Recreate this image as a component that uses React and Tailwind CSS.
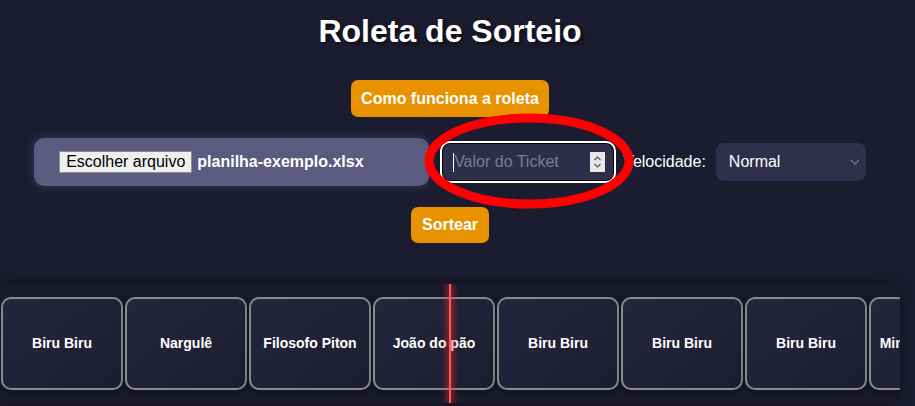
import React from "react";

const cards = ["Biru Biru", "Nargulê", "Filosofo Piton", "João do pão", "Biru Biru", "Biru Biru", "Biru Biru", "Minotauro Azul"];

export default function App() {
  return (
    <div className="relative min-h-[406px] w-[915px] overflow-hidden bg-[#1c1c30] font-['Liberation_Sans',Arial,sans-serif] text-white">
      <div className="flex w-[900px] flex-col items-center">
        <h1 className="mt-[12px] text-[32px] font-bold leading-[38px] [text-shadow:2px_2px_4px_rgba(0,0,0,0.6)]">Roleta de Sorteio</h1>
        <button className="mt-[30px] h-[37px] rounded-[7px] bg-[#e89200] px-[10px] text-[16px] font-bold text-white">Como funciona a roleta</button>
        <div className="mt-[21px] flex items-center">
          <div className="flex h-[48px] w-[395px] items-center rounded-[10px] bg-[#5c5a7e] pl-[25px] shadow-[0_0_10px_rgba(120,118,170,0.35)]">
            <span className="flex h-[22px] items-center border border-[#8f8f8f] bg-[#efefef] px-[6px] text-[16px] font-normal leading-none text-black">Escolher arquivo</span>
            <span className="ml-[5px] text-[16px] font-bold">planilha-exemplo.xlsx</span>
          </div>
          <div className="ml-[13px] flex h-[38px] w-[172px] items-center rounded-[8px] border border-black bg-[#2e2d4a] pr-[8px] pl-[10px] outline-2 outline-white">
            <span className="h-[19px] w-px bg-white"></span>
            <span className="flex-1 text-[16px] text-[#7d7d8e]">Valor do Ticket</span>
            <span className="flex h-[20px] w-[15px] flex-col items-center justify-center bg-[#e8e8e8]">
              <svg width="9" height="16" viewBox="0 0 9 16" fill="none" stroke="#555" strokeWidth="1.2">
                <path d="M1.5 6 L4.5 3 L7.5 6" />
                <path d="M1.5 10 L4.5 13 L7.5 10" />
              </svg>
            </span>
          </div>
          <span className="ml-[9px] text-[16px]">Velocidade:</span>
          <div className="ml-[10px] flex h-[38px] w-[150px] items-center justify-between rounded-[8px] bg-[#2f2e4b] pr-[6px] pl-[13px]">
            <span className="text-[16px]">Normal</span>
            <svg width="10" height="6" viewBox="0 0 10 6" fill="none" stroke="#777" strokeWidth="1.3">
              <path d="M1 1 L5 5 L9 1" />
            </svg>
          </div>
        </div>
        <button className="mt-[21px] h-[36px] rounded-[7px] bg-[#e89200] px-[11px] text-[16px] font-bold text-white">Sortear</button>
        <div className="relative mt-[41px] h-[119px] w-[900px] overflow-hidden rounded-r-[15px] bg-[#1a1a2d] shadow-[0_0_12px_rgba(0,0,0,0.5)]">
          <div className="flex h-full items-center">
            {cards.map((c, i) => (
              <div key={i} className="mx-[1px] flex h-[93px] w-[122px] shrink-0 items-center justify-center rounded-[10px] border-2 border-[#8a8a8a] bg-gradient-to-br from-[#25253d] to-[#1d1d31] text-[14px] font-bold whitespace-nowrap shadow-[0_2px_6px_rgba(0,0,0,0.4)]">
                {c}
              </div>
            ))}
          </div>
          <div className="absolute top-0 left-[449px] h-full w-[2px] bg-[#ff5a5a] shadow-[0_0_6px_2px_rgba(255,40,40,0.6)]"></div>
        </div>
      </div>
      <svg className="pointer-events-none absolute top-0 left-0" width="915" height="406">
        <ellipse cx="529" cy="161" rx="100" ry="43" fill="none" stroke="#ff0000" strokeWidth="9" />
      </svg>
    </div>
  );
}
